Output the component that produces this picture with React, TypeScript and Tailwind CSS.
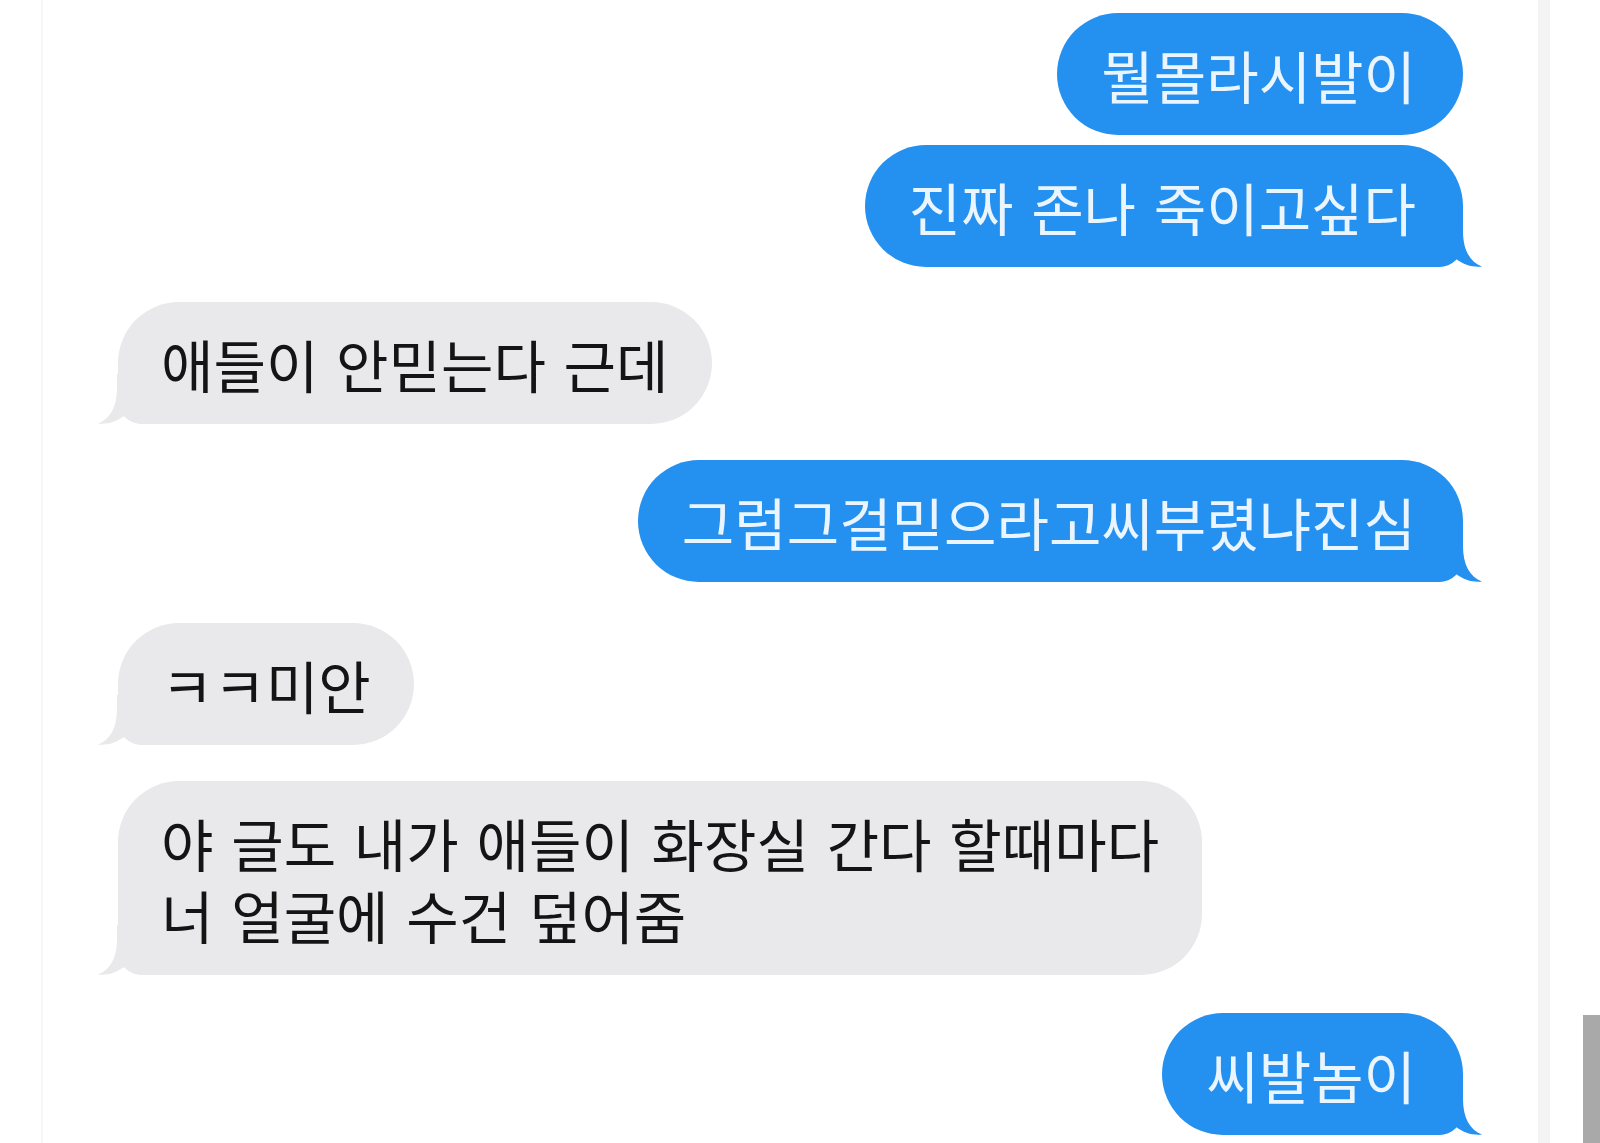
import React from "react";

type Side = "sent" | "recv";

const BLUE = "#2490f0";
const GRAY = "#e9e9eb";

function Tail({ side }: { side: Side }) {
  const color = side === "sent" ? BLUE : GRAY;
  return (
    <svg
      className={
        side === "sent"
          ? "absolute right-[-19px] bottom-0 w-[59px] h-[50px]"
          : "absolute left-[-20px] bottom-0 w-[59px] h-[50px] -scale-x-100"
      }
      viewBox="0 0 59 50"
    >
      <path
        d="M20 0 L40 0 L40 14 C40 33 47 45 59 49.5 C50 50.5 41 48 33 42 C27 47.5 21 50 10 50 L20 0 Z"
        fill={color}
      />
    </svg>
  );
}

function Bubble({
  side,
  tail = true,
  lines,
  className = "",
}: {
  side: Side;
  tail?: boolean;
  lines: string[];
  className?: string;
}) {
  const base =
    side === "sent"
      ? "bg-[#2490f0] text-[#eaf5ff] pl-[44px] pr-[47px] self-end"
      : "bg-[#e9e9eb] text-[#141414] px-[43px] self-start";
  const corners =
    side === "sent"
      ? tail
        ? "rounded-tl-[61px] rounded-tr-[61px] rounded-bl-[61px] rounded-br-[24px]"
        : "rounded-tl-[61px] rounded-tr-[61px] rounded-bl-[61px] rounded-br-[61px]"
      : "rounded-tl-[61px] rounded-tr-[61px] rounded-br-[61px] rounded-bl-[24px]";
  return (
    <div
      className={`relative py-[25px] text-[57px] leading-[72px] whitespace-nowrap [word-spacing:5px] ${base} ${corners} ${className}`}
    >
      {lines.map((l, i) => (
        <div key={i}>{l}</div>
      ))}
      {tail && <Tail side={side} />}
    </div>
  );
}

export default function App() {
  return (
    <div
      className="flex w-[1600px] h-[1143px] overflow-hidden bg-white"
      style={{ fontFamily: '"Noto Sans CJK KR", "Noto Sans", sans-serif' }}
    >
      <div className="w-[41px] bg-white" />
      <div className="w-[2px] bg-[#f6f6f6]" />
      <div className="flex-1 flex flex-col pt-[13px] pl-[75px] pr-[75px]">
        <Bubble side="sent" tail={false} lines={["뭘몰라시발이"]} />
        <Bubble side="sent" lines={["진짜 존나 죽이고싶다"]} className="mt-[10px]" />
        <Bubble side="recv" lines={["애들이 안믿는다 근데"]} className="mt-[35px]" />
        <Bubble side="sent" lines={["그럼그걸믿으라고씨부렸냐진심"]} className="mt-[36px]" />
        <Bubble side="recv" lines={["ㅋㅋ미안"]} className="mt-[41px]" />
        <Bubble
          side="recv"
          lines={["야 글도 내가 애들이 화장실 간다 할때마다", "너 얼굴에 수건 덮어줌"]}
          className="mt-[36px]"
        />
        <Bubble side="sent" lines={["씨발놈이"]} className="mt-[38px]" />
      </div>
      <div className="w-[12px] bg-[#f4f4f4]" />
      <div className="w-[50px] flex justify-end">
        <div className="w-[17px] mt-[1015px] h-[128px] bg-[#a9a9a9]" />
      </div>
    </div>
  );
}
